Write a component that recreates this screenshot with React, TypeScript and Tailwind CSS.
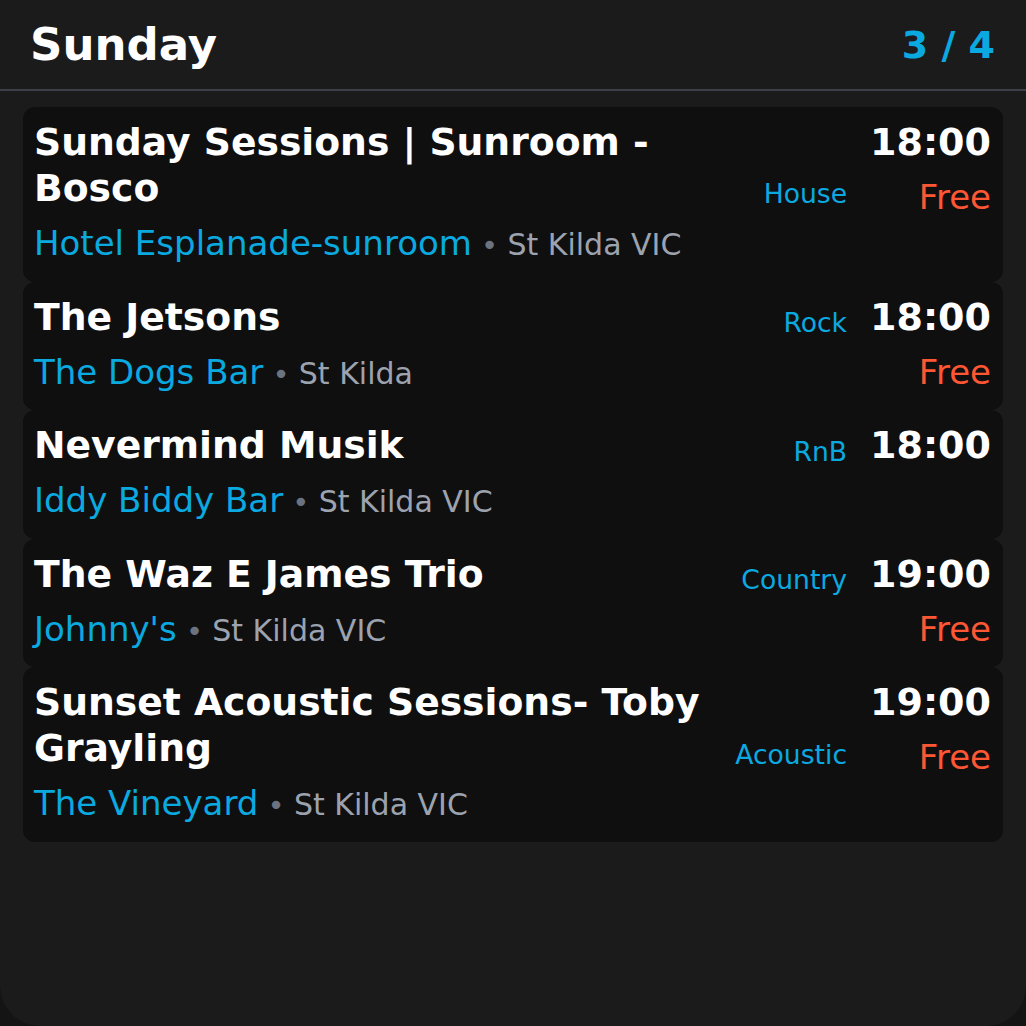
const events = [
  { title: "Sunday Sessions | Sunroom - Bosco", venue: "Hotel Esplanade-sunroom", place: "St Kilda VIC", genre: "House", time: "18:00", price: "Free" },
  { title: "The Jetsons", venue: "The Dogs Bar", place: "St Kilda", genre: "Rock", time: "18:00", price: "Free" },
  { title: "Nevermind Musik", venue: "Iddy Biddy Bar", place: "St Kilda VIC", genre: "RnB", time: "18:00", price: "" },
  { title: "The Waz E James Trio", venue: "Johnny's", place: "St Kilda VIC", genre: "Country", time: "19:00", price: "Free" },
  { title: "Sunset Acoustic Sessions- Toby Grayling", venue: "The Vineyard", place: "St Kilda VIC", genre: "Acoustic", time: "19:00", price: "Free" },
]

export default function App() {
  return (
    <div className="w-[1026px] h-[1026px] bg-[#141414] font-['DejaVu_Sans',sans-serif]">
      <div className="w-full h-full bg-[#1b1b1b] rounded-b-[40px] flex flex-col">
        <div className="flex items-center justify-between pl-[30px] pr-[31px] h-[91px] border-b-2 border-[#3a3f4a]">
          <h1 className="text-[45px] font-bold text-white leading-none -mt-[1px]">Sunday</h1>
          <span className="text-[38px] font-bold text-[#0aa9e0] leading-none">3 / 4</span>
        </div>
        <div className="flex flex-col px-[23px] pt-[16px]">
          {events.map((ev) => (
            <div key={ev.title} className="flex bg-[#0f0f0f] rounded-[12px] py-[12px] pl-[11px] pr-[12px] gap-[24px]">
              <div className="flex-1 flex flex-col">
                <div className="flex items-end gap-[16px]">
                  <div className="flex-1 text-[37.7px] leading-[46px] font-bold text-white">{ev.title}</div>
                  <div className="text-[26.6px] leading-none text-[#0aa9e0] pb-[3px]">{ev.genre}</div>
                </div>
                <div className="mt-[8px] text-[34px] leading-[48.6px] whitespace-nowrap">
                  <span className="text-[#0aa9e0]">{ev.venue}</span>
                  <span className="text-[#6b7280] text-[29px]"> • </span>
                  <span className="text-[#9ca3af] text-[30px]">{ev.place}</span>
                </div>
              </div>
              <div className="flex flex-col items-end w-[120px]">
                <div className="text-[38px] leading-[46px] font-bold text-white">{ev.time}</div>
                {ev.price && (
                  <div className="mt-[8px] text-[34px] leading-[48px] text-[#ff5733]">{ev.price}</div>
                )}
              </div>
            </div>
          ))}
        </div>
      </div>
    </div>
  )
}
